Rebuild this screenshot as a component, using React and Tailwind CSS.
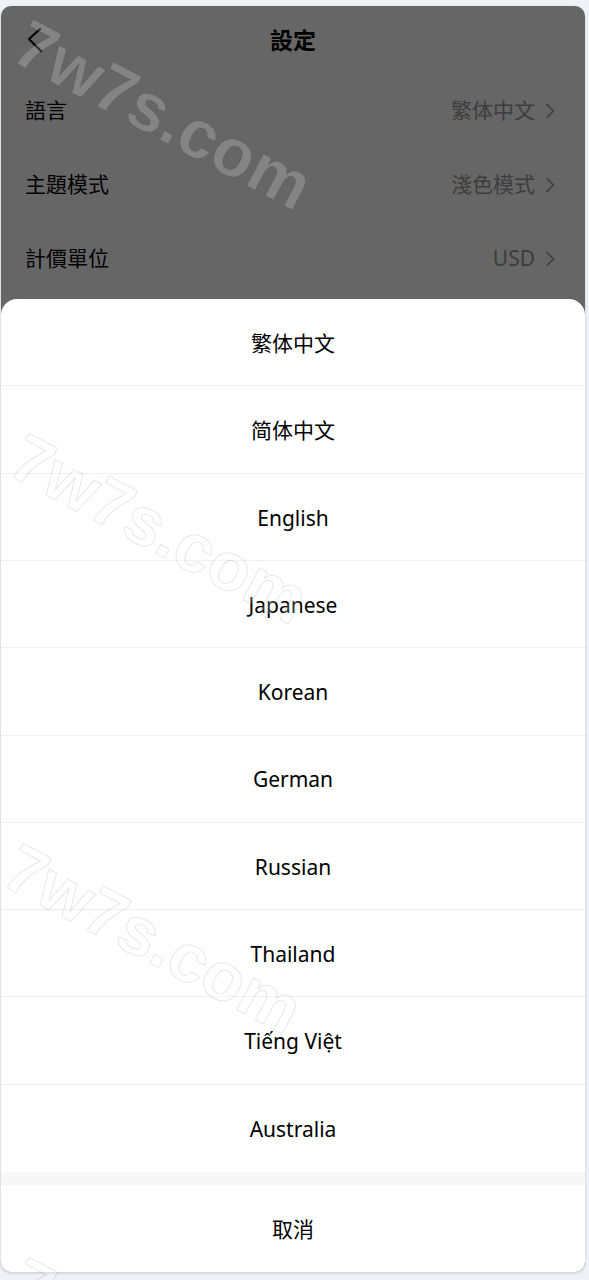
import React from 'react';

const languages = ['繁体中文','简体中文','English','Japanese','Korean','German','Russian','Thailand','Tiếng Việt','Australia'];

const settings = [
  { label:'語言', value:'繁体中文' },
  { label:'主題模式', value:'淺色模式' },
  { label:'計價單位', value:'USD' },
];

function Chevron({ className }){
  return (
    <svg width="10" height="16" viewBox="0 0 10 16" fill="none" className={className}>
      <path d="M2 1.5 L8.5 8 L2 14.5" stroke="currentColor" strokeWidth="1.6" strokeLinecap="round" strokeLinejoin="round" />
    </svg>
  );
}

function Watermark({ top, left }){
  return (
    <div style={{ top, left }} className="absolute origin-top-left rotate-[28deg] pointer-events-none select-none whitespace-nowrap text-[68px] leading-none font-bold text-white/20 [-webkit-text-stroke:1px_rgba(0,0,0,0.1)] [font-family:'Liberation_Sans',Arial,sans-serif]">
      7w7s.com
    </div>
  );
}

export default function App(){
  return (
    <div className="relative h-[1280px] overflow-hidden bg-[#eef1f7] pt-[6px] pl-[1px] [font-family:'Noto_Sans','Noto_Sans_CJK_SC',sans-serif]">
      <div className="relative w-[584px] h-[1266px] rounded-[10px] overflow-hidden bg-white shadow-[0_1px_3px_rgba(0,0,0,0.18)]">
        {/* settings page under the mask */}
        <div className="relative h-[68px] flex items-center justify-center">
          <svg width="16" height="26" viewBox="0 0 16 26" fill="none" className="absolute left-[26px] top-[21px] text-black">
            <path d="M13 2 L2 12 L14 24" stroke="currentColor" strokeWidth="2.2" strokeLinecap="round" strokeLinejoin="round" />
          </svg>
          <span className="text-[23px] font-bold text-black">設定</span>
        </div>
        {settings.map(s => (
          <div key={s.label} className="h-[74px] flex items-center justify-between pl-[24px] pr-[30px]">
            <span className="text-[21px] text-black">{s.label}</span>
            <span className="flex items-center gap-[10px] text-[21px] text-[#999]">
              {s.value}
              <Chevron className="text-[#999]" />
            </span>
          </div>
        ))}

        {/* mask + action sheet */}
        <div className="absolute inset-0 bg-black/60 flex flex-col justify-end">
          <div className="bg-white rounded-t-[16px] flex flex-col">
            {languages.map((l, i) => (
              <div key={l} className={`h-[87.3px] pt-[3px] flex items-center justify-center text-[21px] text-black ${i < languages.length-1 ? 'border-b border-[#f0f0f0]' : ''}`}>
                {l}
              </div>
            ))}
            <div className="h-[13px] bg-[#f7f7f7]" />
            <div className="h-[87px] pt-[3px] flex items-center justify-center text-[21px] text-black">取消</div>
          </div>
        </div>
      </div>

      <Watermark top={8} left={36} />
      <Watermark top={422} left={32} />
      <Watermark top={832} left={26} />
      <Watermark top={1246} left={32} />
    </div>
  );
}
